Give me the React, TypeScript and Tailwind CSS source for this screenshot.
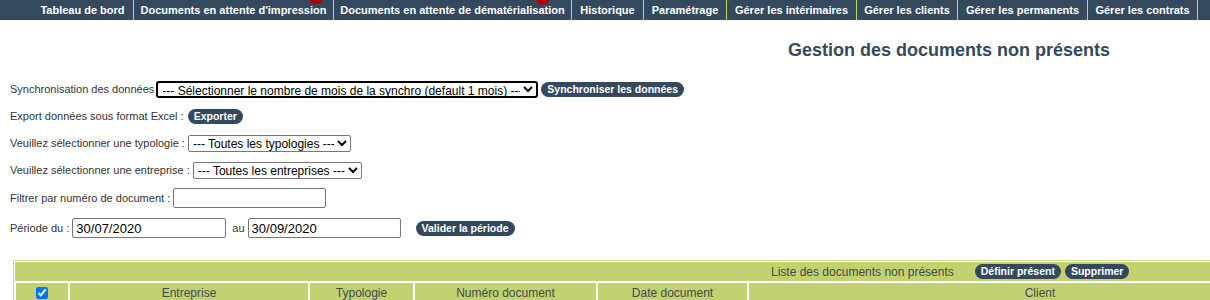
const navItems = [
  { label: "Tableau de bord", w: "w-[102px]" },
  { label: "Documents en attente d'impression", w: "w-[200px]" },
  { label: "Documents en attente de dématérialisation", w: "w-[238px]" },
  { label: "Historique", w: "w-[72px]" },
  { label: "Paramétrage", w: "w-[83px]" },
  { label: "Gérer les intérimaires", w: "w-[130px]" },
  { label: "Gérer les clients", w: "w-[101px]" },
  { label: "Gérer les permanents", w: "w-[130px]" },
  { label: "Gérer les contrats", w: "w-[110px]" },
];

const columns = [
  { label: "Typologie", w: "w-[103px]" },
  { label: "Numéro document", w: "w-[181px]" },
  { label: "Date document", w: "w-[149px]" },
];

const Pill = ({ children, className = "" }: { children: React.ReactNode; className?: string }) => (
  <button
    className={`h-[15px] px-[6px] rounded-full bg-[#34495e] text-white text-[10.5px] font-bold leading-[15px] whitespace-nowrap ${className}`}
  >
    {children}
  </button>
);

const App = () => {
  return (
    <div className="w-[1210px] h-[300px] overflow-hidden bg-white font-['Liberation_Sans',Arial,sans-serif] text-[#333] text-[11px]">
      {/* top navigation */}
      <nav className="relative h-[20px] bg-[#34495e] flex pl-[32px]">
        {navItems.map((item) => (
          <div
            key={item.label}
            className={`${item.w} shrink-0 h-full flex items-center justify-center border-r border-[#c5d36b] text-white text-[11px] font-bold whitespace-nowrap`}
          >
            {item.label}
          </div>
        ))}
        <span className="absolute left-[309px] top-[-8px] w-[14px] h-[12px] rounded-full bg-[#b00000]" />
        <span className="absolute left-[536px] top-[-8px] w-[13px] h-[13px] rounded-full bg-[#b00000]" />
      </nav>

      <div className="h-[60px] flex items-center">
        <h1 className="ml-[688px] w-[522px] text-center text-[18px] font-bold text-[#34495e]">
          Gestion des documents non présents
        </h1>
      </div>

      <div className="pl-[10px]">
        <div className="h-[18px] flex items-center">
          <span>Synchronisation des données</span>
          <select className="ml-[2px] w-[382px] h-[17px] py-0 border-2 border-black rounded-[3px] text-[12px] text-black leading-[13px]">
            <option>--- Sélectionner le nombre de mois de la synchro (default 1 mois) ---</option>
          </select>
          <Pill className="ml-[3px]">Synchroniser les données</Pill>
        </div>

        <div className="h-[18px] mt-[9px] flex items-center">
          <span>Export données sous format Excel :</span>
          <Pill className="ml-[4px]">Exporter</Pill>
        </div>

        <div className="h-[18px] mt-[9px] flex items-center">
          <span>Veuillez sélectionner une typologie :</span>
          <select className="ml-[3px] w-[163px] h-[17px] py-0 border border-[#767676] rounded-[2px] text-[12px] text-black leading-[15px]">
            <option>--- Toutes les typologies ---</option>
          </select>
        </div>

        <div className="h-[18px] mt-[9px] flex items-center">
          <span>Veuillez sélectionner une entreprise :</span>
          <select className="ml-[3px] w-[169px] h-[17px] py-0 border border-[#767676] rounded-[2px] text-[12px] text-black leading-[15px]">
            <option>--- Toutes les entreprises ---</option>
          </select>
        </div>

        <div className="h-[22px] mt-[8px] flex items-center">
          <span>Filtrer par numéro de document :</span>
          <input className="ml-[3px] w-[153px] h-[20px] border border-[#767676] rounded-[2px] px-[3px] text-[13px]" />
        </div>

        <div className="h-[22px] mt-[8px] flex items-center">
          <span>Période du :</span>
          <input
            defaultValue="30/07/2020"
            className="ml-[3px] w-[154px] h-[20px] border border-[#767676] rounded-[2px] px-[3px] text-[13px] text-black"
          />
          <span className="ml-[6px]">au</span>
          <input
            defaultValue="30/09/2020"
            className="ml-[3px] w-[153px] h-[20px] border border-[#767676] rounded-[2px] px-[3px] text-[13px] text-black"
          />
          <Pill className="ml-[15px]">Valider la période</Pill>
        </div>
      </div>

      {/* list table */}
      <div className="mt-[21px] ml-[13px] w-[1320px] border border-[#c9d68a] p-[1px] flex flex-col gap-[2px] text-[12px] text-[#3f4b4f]">
        <div className="h-[19px] bg-[#c3d271] flex items-center pl-[756px]">
          <span>Liste des documents non présents</span>
          <Pill className="ml-[21px]">Définir présent</Pill>
          <Pill className="ml-[4px]">Supprimer</Pill>
        </div>
        <div className="h-[19px] flex gap-[2px] pl-[1px]">
          <div className="w-[52px] bg-[#c3d271] flex items-center justify-center">
            <input type="checkbox" defaultChecked className="w-[12px] h-[12px] accent-[#0075ff]" />
          </div>
          <div className="w-[238px] bg-[#c3d271] flex items-center justify-center">Entreprise</div>
          {columns.map((c) => (
            <div key={c.label} className={`${c.w} bg-[#c3d271] flex items-center justify-center`}>
              {c.label}
            </div>
          ))}
          <div className="flex-1 bg-[#c3d271] flex items-center justify-center">Client</div>
        </div>
      </div>
    </div>
  );
};

export default App;
